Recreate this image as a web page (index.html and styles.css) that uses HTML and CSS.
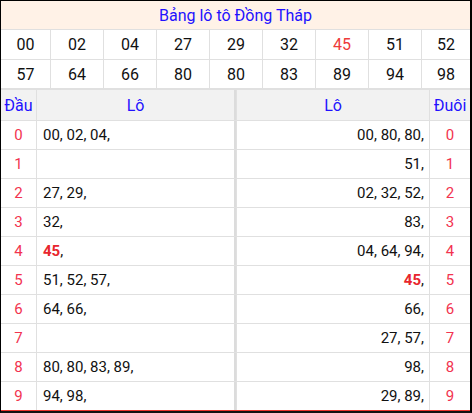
FILE: index.html
```html
<!DOCTYPE html>
<html lang="vi">
<head>
<meta charset="utf-8">
<link rel="stylesheet" href="styles.css">
</head>
<body>
<div class="frame">
  <div class="title">Bảng lô tô Đồng Tháp</div>
  <div class="nums">
    <div class="n">00</div><div class="n">02</div><div class="n">04</div><div class="n">27</div><div class="n">29</div><div class="n">32</div><div class="n hot">45</div><div class="n">51</div><div class="n">52</div>
    <div class="n">57</div><div class="n">64</div><div class="n">66</div><div class="n">80</div><div class="n">80</div><div class="n">83</div><div class="n">89</div><div class="n">94</div><div class="n">98</div>
  </div>
  <div class="lo">
    <div class="h">Đầu</div><div class="h sep">Lô</div><div class="h">Lô</div><div class="h">Đuôi</div>

    <div class="d">0</div><div class="l sep">00, 02, 04,</div><div class="r">00, 80, 80,</div><div class="d">0</div>
    <div class="d">1</div><div class="l sep"></div><div class="r">51,</div><div class="d">1</div>
    <div class="d">2</div><div class="l sep">27, 29,</div><div class="r">02, 32, 52,</div><div class="d">2</div>
    <div class="d">3</div><div class="l sep">32,</div><div class="r">83,</div><div class="d">3</div>
    <div class="d">4</div><div class="l sep"><b class="hot">45</b>,</div><div class="r">04, 64, 94,</div><div class="d">4</div>
    <div class="d">5</div><div class="l sep">51, 52, 57,</div><div class="r"><b class="hot">45</b>,</div><div class="d">5</div>
    <div class="d">6</div><div class="l sep">64, 66,</div><div class="r">66,</div><div class="d">6</div>
    <div class="d">7</div><div class="l sep"></div><div class="r">27, 57,</div><div class="d">7</div>
    <div class="d">8</div><div class="l sep">80, 80, 83, 89,</div><div class="r">98,</div><div class="d">8</div>
    <div class="d">9</div><div class="l sep">94, 98,</div><div class="r">29, 89,</div><div class="d">9</div>
  </div>
</div>
</body>
</html>
```
FILE: styles.css
```css
* { box-sizing: border-box; }
html, body { margin: 0; padding: 0; background: #fff; }
body { font-family: Roboto, "Liberation Sans", sans-serif; color: #111; }

.frame {
  width: 472px;
  height: 413px;
  border-top: 1px solid #000;
  border-left: 1px solid #000;
  border-right: 2px solid #000;
  border-bottom: 2px solid #111;
  overflow: hidden;
}

.title {
  height: 29px;
  border-bottom: 1px solid #e0e0e0;
  background: #fff2e7;
  color: #2211ff;
  font-size: 16px;
  display: flex;
  align-items: center;
  justify-content: center;
}

.nums {
  display: grid;
  grid-template-columns: 49px repeat(7, 52px) 1fr;
  grid-template-rows: 29px 28px;
  gap: 1px;
  background: #e0e0e0;
  border-bottom: 2px solid #e0e0e0;
}
.n {
  background: #fff;
  font-size: 16px;
  display: flex;
  align-items: center;
  justify-content: center;
}
.n.hot { color: #ee3a3a; }

.lo {
  display: grid;
  grid-template-columns: 35px 199px 192px 1fr;
  grid-template-rows: 30px repeat(10, 28px);
  gap: 1px;
  background: #e0e0e0;
  border-bottom: 1px solid #e8332c;
}
.lo > div {
  background: #fff;
  display: flex;
  align-items: center;
}
.lo > .sep { border-right: 2px solid #dcdcdc; }
.lo > .h {
  background: #f2f2f2;
  color: #2211ff;
  font-size: 16px;
  justify-content: center;
}
.lo > .d {
  color: #f2334f;
  font-size: 15px;
  justify-content: center;
}
.lo > .l {
  font-size: 15px;
  padding-left: 6px;
}
.lo > .r {
  font-size: 15px;
  justify-content: flex-end;
  padding-right: 5px;
}
.hot { color: #e8262e; }
b.hot { font-weight: 700; }
```
